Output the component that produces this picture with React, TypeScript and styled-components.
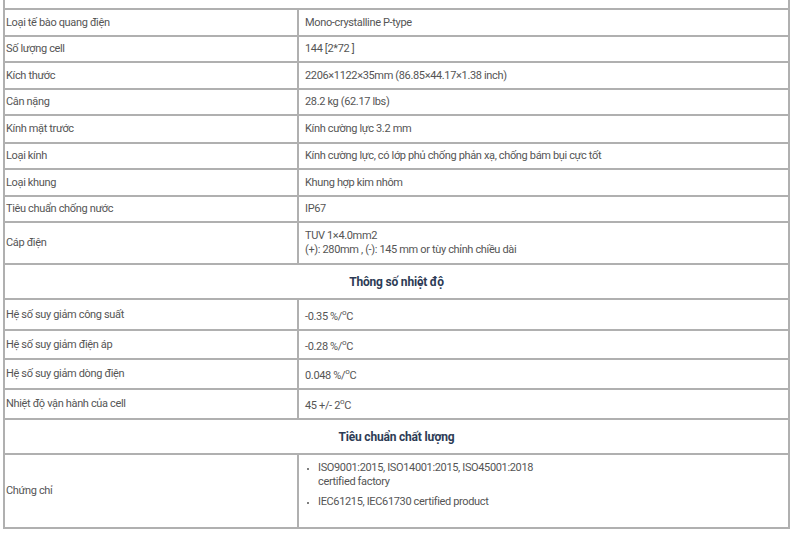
import styled, { createGlobalStyle } from 'styled-components';

const GlobalStyle = createGlobalStyle`
  html, body {
    margin: 0;
    padding: 0;
    background: #fff;
  }
  body {
    font-family: "Roboto", "Liberation Sans", sans-serif;
    color: #555;
  }
`;

const Wrapper = styled.div`
  padding: 0 3px;
  width: 792px;
  box-sizing: border-box;
`;

const SpecTable = styled.table`
  width: 787px;
  table-layout: fixed;
  border-collapse: collapse;
  font-size: 11px;
  line-height: 14px;
  letter-spacing: -0.35px;
`;

const LabelCol = styled.col`
  width: 294px;
`;

const Row = styled.tr<{ $h: number }>`
  height: ${p => p.$h}px;
`;

const Cell = styled.td`
  border: 2px solid #b0b0b0;
  vertical-align: middle;
  padding: 0 6px;
  color: #555;
`;

const LabelCell = styled(Cell)`
  padding: 0 1px;
`;

const CaptionCell = styled(Cell)`
  text-align: center;
  font-weight: bold;
  font-size: 12px;
  letter-spacing: -0.2px;
  color: #2d3b55;
`;

const TopStub = styled(Cell)`
  border-top: none;
  padding: 0;
`;

const BulletList = styled.ul`
  margin: 4px 0 16px;
  padding-left: 13px;
  list-style: disc;

  li {
    margin-bottom: 6px;
  }
  li::marker {
    font-size: 8px;
  }
`;

const Deg = styled.sup`
  font-size: 8px;
`;

type Spec = { label: string; value: React.ReactNode; h: number };

const mainSpecs: Spec[] = [
  { label: 'Loại tế bào quang điện', value: 'Mono-crystalline P-type', h: 27 },
  { label: 'Số lượng cell', value: '144 [2*72 ]', h: 26 },
  { label: 'Kích thước', value: '2206×1122×35mm (86.85×44.17×1.38 inch)', h: 27 },
  { label: 'Cân nặng', value: '28.2 kg (62.17 lbs)', h: 26 },
  { label: 'Kính mặt trước', value: 'Kính cường lực 3.2 mm', h: 28 },
  { label: 'Loại kính', value: 'Kính cường lực, có lớp phủ chống phản xạ, chống bám bụi cực tốt', h: 26 },
  { label: 'Loại khung', value: 'Khung hợp kim nhôm', h: 27 },
  { label: 'Tiêu chuẩn chống nước', value: 'IP67', h: 26 },
  {
    label: 'Cáp điện',
    value: (
      <>
        TUV 1×4.0mm2
        <br />
        (+): 280mm , (-): 145 mm or tùy chỉnh chiều dài
      </>
    ),
    h: 42,
  },
];

const tempSpecs: Spec[] = [
  { label: 'Hệ số suy giảm công suất', value: <>-0.35 %/<Deg>o</Deg>C</>, h: 31 },
  { label: 'Hệ số suy giảm điện áp', value: <>-0.28 %/<Deg>o</Deg>C</>, h: 29 },
  { label: 'Hệ số suy giảm dòng điện', value: <>0.048 %/<Deg>o</Deg>C</>, h: 30 },
  { label: 'Nhiệt độ vận hành của cell', value: <>45 +/- 2<Deg>o</Deg>C</>, h: 30 },
];

const SpecRows: React.FC<{ specs: Spec[] }> = ({ specs }) => (
  <>
    {specs.map(s => (
      <Row key={s.label} $h={s.h}>
        <LabelCell>{s.label}</LabelCell>
        <Cell>{s.value}</Cell>
      </Row>
    ))}
  </>
);

const App: React.FC = () => {
  return (
    <Wrapper>
      <GlobalStyle />
      <SpecTable>
        <colgroup>
          <LabelCol />
          <col />
        </colgroup>
        <tbody>
          <Row $h={9}>
            <TopStub colSpan={2} />
          </Row>
          <SpecRows specs={mainSpecs} />
          <Row $h={35}>
            <CaptionCell colSpan={2}>Thông số nhiệt độ</CaptionCell>
          </Row>
          <SpecRows specs={tempSpecs} />
          <Row $h={35}>
            <CaptionCell colSpan={2}>Tiêu chuẩn chất lượng</CaptionCell>
          </Row>
          <Row $h={74}>
            <LabelCell>Chứng chỉ</LabelCell>
            <Cell>
              <BulletList>
                <li>
                  ISO9001:2015, ISO14001:2015, ISO45001:2018
                  <br />
                  certified factory
                </li>
                <li>IEC61215, IEC61730 certified product</li>
              </BulletList>
            </Cell>
          </Row>
        </tbody>
      </SpecTable>
    </Wrapper>
  );
};

export default App;
